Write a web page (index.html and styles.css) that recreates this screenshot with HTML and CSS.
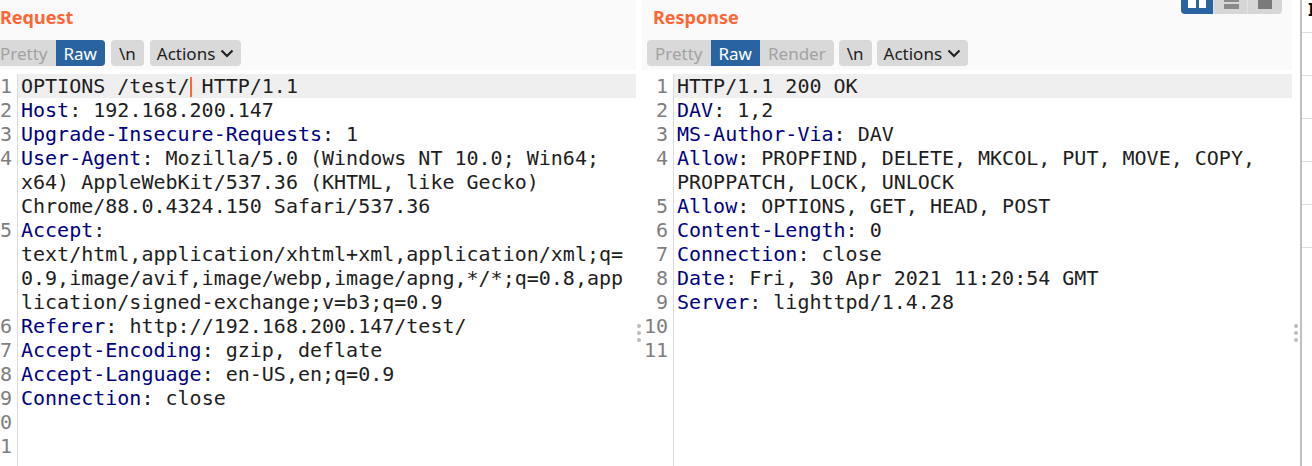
FILE: index.html
```html
<!DOCTYPE html>
<html lang="en">
<head>
<meta charset="utf-8">
<title>Request / Response</title>
<link rel="stylesheet" href="styles.css">
</head>
<body>
<div class="app">
  <section class="panel req">
    <header class="phead">
      <div class="titlerow"><h2 class="title">Request</h2></div>
      <div class="toolbar">
        <div class="seg"><span class="btn dim">Pretty</span><span class="btn on">Raw</span></div>
        <span class="btn single">\n</span>
        <span class="btn single act">Actions <svg class="chev" width="14" height="9" viewBox="0 0 14 9"><polyline points="1.5,1.5 7,7 12.5,1.5" fill="none" stroke="#222" stroke-width="2.2"/></svg></span>
      </div>
    </header>
    <div class="editor">
      <span class="ln">1</span><span class="code cur">OPTIONS /test/<span class="caret"></span> HTTP/1.1</span>
      <span class="ln">2</span><span class="code"><b>Host</b>: 192.168.200.147</span>
      <span class="ln">3</span><span class="code"><b>Upgrade-Insecure-Requests</b>: 1</span>
      <span class="ln">4</span><span class="code"><b>User-Agent</b>: Mozilla/5.0 (Windows NT 10.0; Win64;<br>x64) AppleWebKit/537.36 (KHTML, like Gecko)<br>Chrome/88.0.4324.150 Safari/537.36</span>
      <span class="ln">5</span><span class="code"><b>Accept</b>:<br>text/html,application/xhtml+xml,application/xml;q=<br>0.9,image/avif,image/webp,image/apng,*/*;q=0.8,app<br>lication/signed-exchange;v=b3;q=0.9</span>
      <span class="ln">6</span><span class="code"><b>Referer</b>: http://192.168.200.147/test/</span>
      <span class="ln">7</span><span class="code"><b>Accept-Encoding</b>: gzip, deflate</span>
      <span class="ln">8</span><span class="code"><b>Accept-Language</b>: en-US,en;q=0.9</span>
      <span class="ln">9</span><span class="code"><b>Connection</b>: close</span>
      <span class="ln">10</span><span class="code"></span>
      <span class="ln">11</span><span class="code"></span>
      <span class="ln fill"></span><span class="code fill"></span>
    </div>
  </section>

  <div class="divider"><i></i><i></i><i></i></div>

  <section class="panel res">
    <header class="phead">
      <div class="titlerow">
        <h2 class="title">Response</h2>
        <div class="views">
          <span class="vbtn von"><svg width="32" height="14" viewBox="0 0 32 14"><rect x="7" y="-2" width="8" height="10" fill="#fff"/><rect x="18" y="-2" width="7" height="10" fill="#fff"/></svg></span>
          <span class="vbtn"><svg width="33" height="14" viewBox="0 0 33 14"><rect x="10" y="-1" width="15" height="3" fill="#8a8a8a"/><rect x="10" y="4" width="15" height="5" fill="#8a8a8a"/></svg></span>
          <span class="vbtn"><svg width="34" height="14" viewBox="0 0 34 14"><rect x="10" y="-2" width="14" height="11" fill="#7a7a7a"/></svg></span>
        </div>
      </div>
      <div class="toolbar">
        <div class="seg"><span class="btn dim">Pretty</span><span class="btn on">Raw</span><span class="btn dim">Render</span></div>
        <span class="btn single">\n</span>
        <span class="btn single act">Actions <svg class="chev" width="14" height="9" viewBox="0 0 14 9"><polyline points="1.5,1.5 7,7 12.5,1.5" fill="none" stroke="#222" stroke-width="2.2"/></svg></span>
      </div>
    </header>
    <div class="editor">
      <span class="ln">1</span><span class="code cur">HTTP/1.1 200 OK</span>
      <span class="ln">2</span><span class="code"><b>DAV</b>: 1,2</span>
      <span class="ln">3</span><span class="code"><b>MS-Author-Via</b>: DAV</span>
      <span class="ln">4</span><span class="code"><b>Allow</b>: PROPFIND, DELETE, MKCOL, PUT, MOVE, COPY,<br>PROPPATCH, LOCK, UNLOCK</span>
      <span class="ln">5</span><span class="code"><b>Allow</b>: OPTIONS, GET, HEAD, POST</span>
      <span class="ln">6</span><span class="code"><b>Content-Length</b>: 0</span>
      <span class="ln">7</span><span class="code"><b>Connection</b>: close</span>
      <span class="ln">8</span><span class="code"><b>Date</b>: Fri, 30 Apr 2021 11:20:54 GMT</span>
      <span class="ln">9</span><span class="code"><b>Server</b>: lighttpd/1.4.28</span>
      <span class="ln">10</span><span class="code"></span>
      <span class="ln">11</span><span class="code"></span>
      <span class="ln fill"></span><span class="code fill"></span>
    </div>
  </section>

  <div class="divider wide"><i></i><i></i><i></i></div>

  <aside class="inspector">
    <div class="ititle">Inspector</div>
    <div class="irow"></div>
    <div class="irow"></div>
    <div class="irow"></div>
    <div class="irow"></div>
    <div class="irow"></div>
    <div class="irow last"></div>
  </aside>
</div>
</body>
</html>
```

FILE: styles.css
```css
html, body {
  margin: 0;
  padding: 0;
  background: #ffffff;
  overflow: hidden;
}

.app {
  display: flex;
  width: 1312px;
  height: 466px;
  overflow: hidden;
  background: #ffffff;
}

.panel {
  display: flex;
  flex-direction: column;
  overflow: hidden;
  min-width: 0;
}

.panel.req {
  width: 636px;
  flex: 0 0 636px;
}

.panel.res {
  width: 650px;
  flex: 0 0 650px;
}

.phead {
  background: #fafafa;
  height: 70px;
  box-sizing: border-box;
  padding-bottom: 4px;
  flex: 0 0 auto;
}

.titlerow {
  display: flex;
  justify-content: space-between;
  align-items: flex-start;
  height: 34px;
}

.title {
  margin: 0;
  font-family: "Noto Sans", "Open Sans", sans-serif;
  font-weight: 700;
  font-size: 18px;
  line-height: 34px;
  color: #ff6633;
}

.res .title {
  padding-left: 11px;
}

.toolbar {
  display: flex;
  gap: 6px;
  margin-top: 6px;
  height: 26px;
}

.req .toolbar {
  margin-left: -8px;
}

.res .toolbar {
  padding-left: 5px;
  gap: 5px;
}

.seg {
  display: flex;
  background: #d9d9d9;
  border-radius: 4px;
  overflow: hidden;
}

.btn {
  display: inline-flex;
  align-items: center;
  height: 26px;
  padding: 0 8px;
  font-family: "Noto Sans", "Open Sans", sans-serif;
  font-size: 17px;
  color: #1c1c1c;
  white-space: nowrap;
}

.btn.dim {
  color: #a2a2a2;
}

.btn.on {
  background: #2a64a0;
  color: #ffffff;
}

.btn.single {
  background: #d9d9d9;
  border-radius: 4px;
}

.btn.act {
  gap: 5px;
  padding-left: 7px;
  padding-right: 7px;
}

.chev {
  display: block;
  margin-top: 1px;
}

.views {
  display: flex;
  height: 14px;
  margin-right: 10px;
  border-radius: 0 0 4px 4px;
  overflow: hidden;
}

.vbtn {
  display: block;
  height: 14px;
  background: #d6d6d6;
}

.vbtn + .vbtn {
  border-left: 1px solid #e2e2e2;
}

.vbtn svg {
  display: block;
}

.vbtn.von {
  background: #2a64a0;
}

.editor {
  flex: 1 1 auto;
  margin-top: 4px;
  display: grid;
  grid-template-columns: 31px 1fr;
  grid-template-rows: repeat(11, auto) 1fr;
  font-family: "DejaVu Sans Mono", monospace;
  font-size: 20px;
  line-height: 24px;
  color: #1e1e1e;
}

.req .editor {
  margin-left: -13px;
}

.res .editor {
  margin-left: 1px;
}

.ln {
  box-sizing: border-box;
  border-right: 1px solid #dcdcdc;
  padding-right: 5px;
  text-align: right;
  color: #7e7e7e;
  min-height: 24px;
}

.code {
  padding-left: 3px;
  white-space: pre;
  min-height: 24px;
}

.code b {
  font-weight: 400;
  color: #000080;
}

.code.cur {
  background: #efefef;
}

.fill {
  min-height: 0;
}

.caret {
  display: inline-block;
  width: 0;
  height: 20px;
  border-left: 2px solid #ff6633;
  margin-right: -2px;
  vertical-align: -4px;
}

.divider {
  flex: 0 0 6px;
  width: 6px;
  display: flex;
  flex-direction: column;
  align-items: center;
  gap: 3px;
  padding-top: 324px;
  box-sizing: border-box;
}

.divider.wide {
  flex: 0 0 8px;
  width: 8px;
}

.divider i {
  display: block;
  width: 4px;
  height: 4px;
  border-radius: 50%;
  background: #bdbdbd;
}

.inspector {
  flex: 0 0 12px;
  width: 12px;
  border-left: 2px solid #c4bcbd;
  box-sizing: border-box;
  overflow: hidden;
  background: #ffffff;
}

.ititle {
  height: 32px;
  box-sizing: border-box;
  padding: 0 0 0 6px;
  font-family: "Noto Sans", "Open Sans", sans-serif;
  font-weight: 700;
  font-size: 18px;
  line-height: 18px;
  color: #000000;
  white-space: nowrap;
  width: 200px;
}

.irow {
  height: 43px;
  border-top: 1px solid #dddddd;
  box-sizing: border-box;
}

.irow.last {
  height: 0;
}
```
